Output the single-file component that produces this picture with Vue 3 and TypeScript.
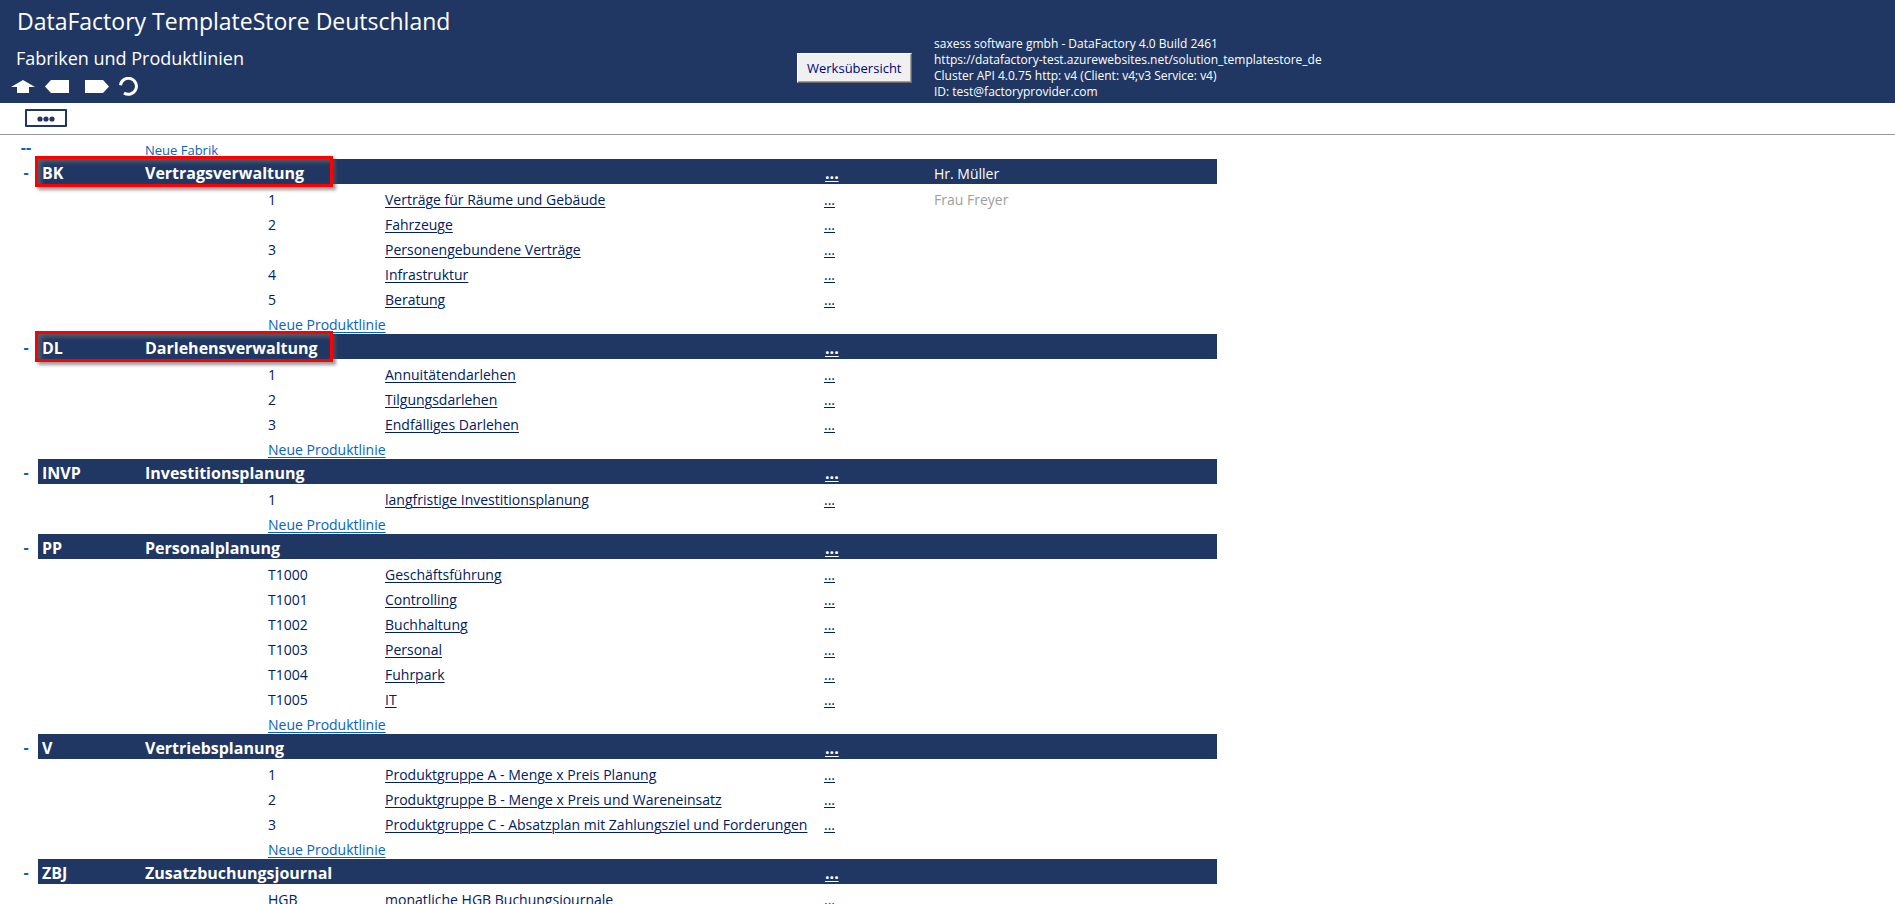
<script setup lang="ts">
interface ProductLine { code: string; name: string; owner?: string }
interface Factory { code: string; name: string; owner?: string; marked?: boolean; lines: ProductLine[] }

const info: string[] = [
  'saxess software gmbh - DataFactory 4.0 Build 2461',
  'https://datafactory-test.azurewebsites.net/solution_templatestore_de',
  'Cluster API 4.0.75 http: v4 (Client: v4;v3 Service: v4)',
  'ID: test@factoryprovider.com',
]

const factories: Factory[] = [
  {
    code: 'BK', name: 'Vertragsverwaltung', owner: 'Hr. Müller', marked: true,
    lines: [
      { code: '1', name: 'Verträge für Räume und Gebäude', owner: 'Frau Freyer' },
      { code: '2', name: 'Fahrzeuge' },
      { code: '3', name: 'Personengebundene Verträge' },
      { code: '4', name: 'Infrastruktur' },
      { code: '5', name: 'Beratung' },
    ],
  },
  {
    code: 'DL', name: 'Darlehensverwaltung', marked: true,
    lines: [
      { code: '1', name: 'Annuitätendarlehen' },
      { code: '2', name: 'Tilgungsdarlehen' },
      { code: '3', name: 'Endfälliges Darlehen' },
    ],
  },
  { code: 'INVP', name: 'Investitionsplanung', lines: [{ code: '1', name: 'langfristige Investitionsplanung' }] },
  {
    code: 'PP', name: 'Personalplanung',
    lines: [
      { code: 'T1000', name: 'Geschäftsführung' },
      { code: 'T1001', name: 'Controlling' },
      { code: 'T1002', name: 'Buchhaltung' },
      { code: 'T1003', name: 'Personal' },
      { code: 'T1004', name: 'Fuhrpark' },
      { code: 'T1005', name: 'IT' },
    ],
  },
  {
    code: 'V', name: 'Vertriebsplanung',
    lines: [
      { code: '1', name: 'Produktgruppe A - Menge x Preis Planung' },
      { code: '2', name: 'Produktgruppe B - Menge x Preis und Wareneinsatz' },
      { code: '3', name: 'Produktgruppe C - Absatzplan mit Zahlungsziel und Forderungen' },
    ],
  },
  { code: 'ZBJ', name: 'Zusatzbuchungsjournal', lines: [{ code: 'HGB', name: 'monatliche HGB Buchungsjournale' }] },
]
</script>

<template>
  <div class="page">
    <header class="banner">
      <div class="heading">
        <h1>DataFactory TemplateStore Deutschland</h1>
        <h2>Fabriken und Produktlinien</h2>
        <nav class="nav">
          <button type="button" aria-label="Start" class="up">
            <svg width="24" height="20" viewBox="0 0 24 20"><path d="M12 3 24 10H18V16H6V10H0Z" /></svg>
          </button>
          <button type="button" aria-label="Zurück" class="back">
            <svg width="24" height="20" viewBox="0 0 24 20"><path d="M0 9.500 6 3H24V16H6Z" /></svg>
          </button>
          <button type="button" aria-label="Vor" class="forward">
            <svg width="24" height="20" viewBox="0 0 24 20"><path d="M24 9.500 18 3H0V16H18Z" /></svg>
          </button>
          <button type="button" aria-label="Aktualisieren">
            <svg width="20" height="20" viewBox="0 0 20 20">
              <path class="arc" d="M1.500 8.200A8 8 0 1 1 5 16" />
            </svg>
          </button>
        </nav>
      </div>
      <div class="action"><button type="button" class="overview">Werksübersicht</button></div>
      <div class="info"><p v-for="t in info" :key="t">{{ t }}</p></div>
    </header>

    <div class="toolbar">
      <button type="button" class="more" aria-label="Mehr">
        <svg width="18" height="6" viewBox="0 0 18 6"><circle cx="3" cy="3" r="2.600" /><circle cx="9" cy="3" r="2.600" /><circle cx="15" cy="3" r="2.600" /></svg>
      </button>
    </div>

    <table class="list">
      <colgroup>
        <col class="c-toggle" /><col class="c-factory" /><col class="c-title" /><col class="c-code" />
        <col class="c-name" /><col class="c-dots" /><col class="c-owner" />
      </colgroup>
      <tbody>
        <tr class="first">
          <td class="toggle"><button type="button">--</button></td>
          <td></td>
          <td colspan="5"><a class="new factory-link" href="#">Neue Fabrik</a></td>
        </tr>
      </tbody>
      <tbody v-for="f in factories" :key="f.code">
        <tr class="factory">
          <td class="toggle"><button type="button">-</button></td>
          <th scope="row" class="key">{{ f.code }}<span v-if="f.marked" class="mark"></span></th>
          <th colspan="3">{{ f.name }}</th>
          <td class="dots"><a href="#">...</a></td>
          <td class="owner">{{ f.owner }}</td>
        </tr>
        <tr v-for="l in f.lines" :key="l.code">
          <td colspan="3"></td>
          <td>{{ l.code }}</td>
          <td><a href="#">{{ l.name }}</a></td>
          <td><a href="#">...</a></td>
          <td class="person">{{ l.owner }}</td>
        </tr>
        <tr>
          <td colspan="3"></td>
          <td colspan="4"><a class="new" href="#">Neue Produktlinie</a></td>
        </tr>
      </tbody>
    </table>
  </div>
</template>

<style>
body { margin: 0; background: #fff; }
</style>

<style scoped>
.page {
  font-family: "Open Sans", "Noto Sans", sans-serif;
  font-size: 14px;
  line-height: 20px;
  color: #002060;
  height: 100vh;
  overflow: hidden;
}
button { font: inherit; color: inherit; padding: 0; border: 0; background: none; cursor: pointer; }
.banner {
  display: grid;
  grid-template-columns: 797px 137px 1fr;
  height: 103px;
  background: #203764;
  color: #fff;
}
h1, h2, p { margin: 0; font-weight: 400; white-space: nowrap; }
h1 { padding: 5px 0 0 17px; font-size: 23px; line-height: 32px; }
h2 { padding: 9px 0 0 16px; font-size: 18px; line-height: 24px; }
.nav { display: flex; padding: 7px 0 0 11px; }
.nav button { display: flex; }
.nav svg { fill: #fff; }
.up { margin-right: 10px; }
.back { margin-right: 16px; }
.forward { margin-right: 10px; }
.nav .arc { fill: none; stroke: #fff; stroke-width: 3; }
.action { padding-top: 53px; }
.overview {
  padding: 0 9px;
  height: 30px;
  background: #f0f0f0;
  color: #000080;
  font-size: 13px;
  border: 1px solid;
  border-color: #fff #696969 #696969 #fff;
  box-shadow: inset -1px -1px #a0a0a0;
}
.info { padding-top: 36px; font-size: 12px; line-height: 16px; }
.toolbar { padding: 6px 25px 7px; border-bottom: 1px solid #999; }
.more {
  display: flex;
  justify-content: center;
  align-items: center;
  width: 42px;
  height: 18px;
  border: 2px solid #203764;
  border-radius: 1px;
}
.more svg { fill: #203764; margin-top: 2px; }
.list { table-layout: fixed; width: 1217px; border-collapse: collapse; }
.c-toggle { width: 38px; }
.c-factory { width: 107px; }
.c-title { width: 123px; }
.c-code { width: 117px; }
.c-name { width: 439px; }
.c-dots { width: 110px; }
.c-owner { width: 283px; }
td, th { height: 25px; padding: 0; box-sizing: border-box; text-align: left; vertical-align: bottom; line-height: 18px; white-space: nowrap; }
.first td { height: 24px; }
a { color: inherit; text-decoration: underline; text-underline-offset: 2px; text-decoration-thickness: 1px; }
.new { color: #0563c1; }
.factory-link { font-size: 13px; text-decoration: none; }
td.toggle { padding-left: 14px; text-align: center; color: #0563c1; font-size: 16px; font-weight: 700; line-height: 24px; }
.factory th, .factory .dots, .factory .owner { background: #203764; color: #fff; line-height: 22px; }
.factory th, .factory .dots { font-size: 16px; font-weight: 700; }
.factory .dots { padding-left: 1px; }
.factory .owner { line-height: 20px; }
.key { position: relative; }
.factory .key { padding-left: 4px; }
.mark {
  position: absolute;
  box-sizing: border-box;
  top: -3px;
  left: -3px;
  width: 298px;
  height: 31px;
  border: 3px solid #f00;
  box-shadow: 3px 3px 3px rgba(90, 90, 90, 0.6), inset 3px 3px 4px rgba(110, 110, 110, 0.7);
}
.person { color: #a0a0a0; }
</style>
